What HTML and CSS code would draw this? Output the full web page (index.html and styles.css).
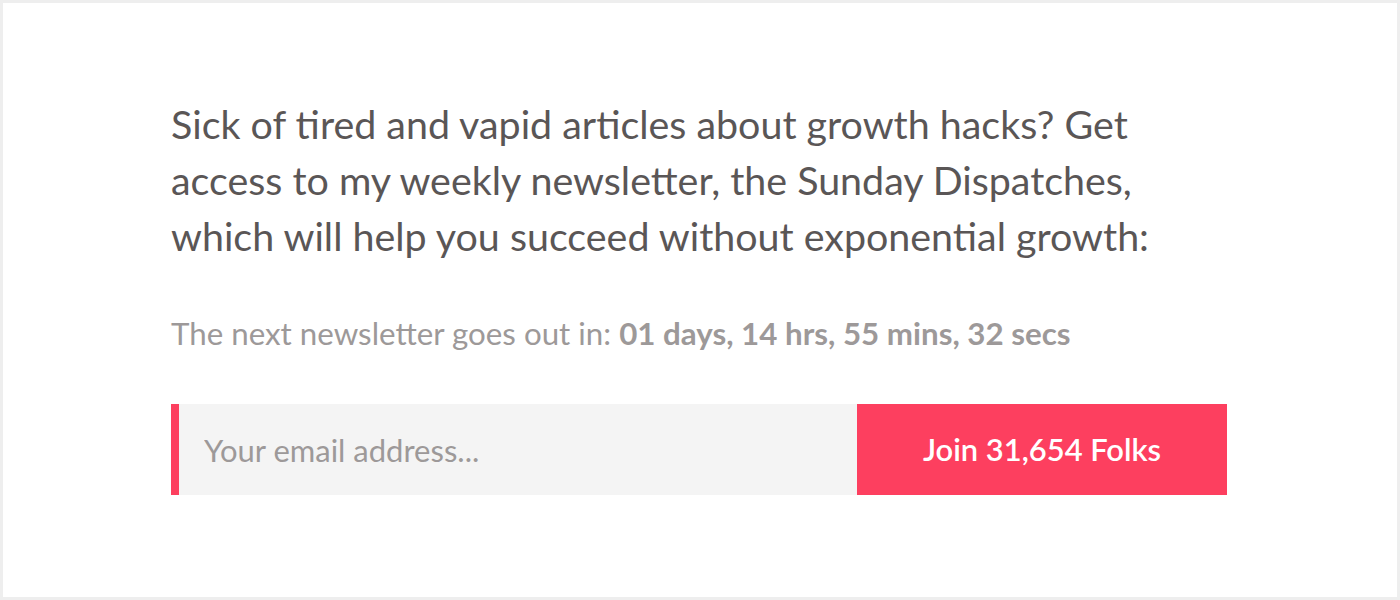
FILE: index.html
```html
<!DOCTYPE html>
<html>
<head>
<meta charset="utf-8">
<link rel="stylesheet" href="styles.css">
</head>
<body>
<div class="frame">
  <div class="content">
    <p class="pitch">Sick of tired and vapid articles about growth hacks? Get access to my weekly newsletter, the Sunday Dispatches, which will help you succeed without exponential growth:</p>
    <p class="countdown">The next newsletter goes out in: <strong>01 days, 14 hrs, 55 mins, 32 secs</strong></p>
    <form class="signup">
      <input class="email" type="email" placeholder="Your email address...">
      <button class="join" type="button">Join 31,654 Folks</button>
    </form>
  </div>
</div>
</body>
</html>
```
FILE: styles.css
```css
* { box-sizing: border-box; }
html, body { margin: 0; padding: 0; background: #fff; }
body { font-family: Lato, "Noto Sans", sans-serif; }
.frame {
  width: 1400px;
  height: 600px;
  border: 3px solid #eeeeee;
  display: flex;
  justify-content: center;
  padding-top: 93px;
  padding-right: 2px;
}
.content { width: 1056px; }
.pitch {
  margin: 0;
  max-width: 1000px;
  font-size: 39.4px;
  line-height: 56px;
  color: #5a5656;
  font-weight: 400;
}
.countdown {
  margin: 49px 0 0;
  font-size: 31.3px;
  line-height: 40px;
  color: #9d9999;
}
.countdown strong { font-weight: 700; }
.signup {
  margin-top: 51px;
  display: flex;
  height: 91px;
}
.email {
  flex: 1;
  border: 0;
  border-left: 8px solid #fd3f5f;
  background: #f4f4f4;
  padding: 0 0 0 25px;
  font-family: inherit;
  font-size: 31px;
  color: #555;
  outline: none;
}
.email::placeholder { color: #9d9999; }
.join {
  width: 370px;
  border: 0;
  background: #fd3f5f;
  color: #fff;
  font-family: inherit;
  font-size: 30.9px;
  font-weight: 600;
  cursor: pointer;
}
```
